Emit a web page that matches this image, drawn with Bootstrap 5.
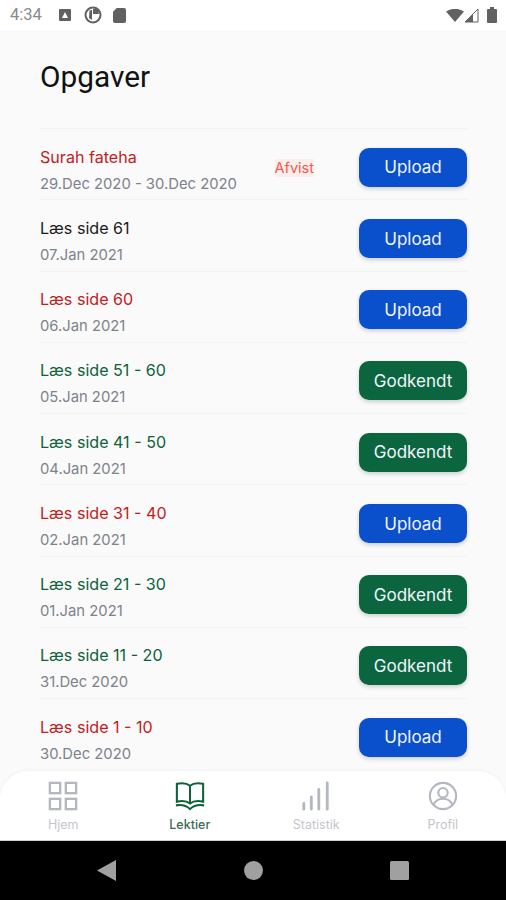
<!DOCTYPE html>
<html lang="da">
<head>
  <meta charset="UTF-8" />
  <meta name="viewport" content="width=device-width, initial-scale=1.0"/>
  <title>Opgaver</title>
  <link href="https://cdn.jsdelivr.net/npm/bootstrap@5.3.0/dist/css/bootstrap.min.css" rel="stylesheet"/>
  <style>
    html, body { height: 100%; }
    body {
      background-color: #fafafa;
      font-family: "Inter", sans-serif;
      overflow: hidden;
    }
    .app-screen { height: 900px; }
    .status-bar {
      height: 30px;
      background-color: #fff;
      color: #8a8a8a;
      font-family: "Roboto", sans-serif;
      font-size: 16.5px;
      padding: 0 9px 0 10px;
    }
    .content-area { padding: 0 39px 0 40px; min-height: 0; }
    .page-title {
      font-family: "Roboto", sans-serif;
      font-size: 29.8px;
      font-weight: 400;
      line-height: 36px;
      color: #111;
      margin: 29px 0 33px;
    }
    .task-row {
      height: 71.25px;
      padding-top: 6px;
      border-top: 1px solid #f3f3f4;
    }
    .task-text { padding-top: 5px; }
    .task-title { font-size: 16.1px; line-height: 20px; margin-bottom: 8px; }
    .task-date { font-size: 14.8px; line-height: 18px; color: #7d828c; }
    .tone-red { color: #c3201c; }
    .tone-green { color: #0e6239; }
    .tone-dark { color: #1a1a1a; }
    .status-tag {
      font-size: 14.5px;
      line-height: 18px;
      color: #ee5a4f;
      background-color: #fdeeec;
      margin: 2px 45px 0 0;
    }
    .task-btn {
      width: 108px;
      height: 39px;
      padding: 2px 0 0;
      border: 0;
      border-radius: 10px;
      color: #f2f5fb;
      font-size: 17px;
      box-shadow: 0 2px 4px rgba(0, 0, 0, .18);
    }
    .btn-upload, .btn-upload:hover { background-color: #0a4fcb; color: #f2f5fb; }
    .btn-approved, .btn-approved:hover { background-color: #0b6640; color: #f2f5fb; }
    .bottom-tabs {
      height: 70px;
      background-color: #fff;
      border-radius: 28px 28px 0 0;
      border-bottom: 1px solid #d0d0d0;
      box-shadow: 0 -1px 3px rgba(0, 0, 0, .04);
      flex-shrink: 0;
    }
    .tab-item {
      width: 25%;
      font-size: 12.5px;
      line-height: 16px;
      color: #c3c6cc;
      padding-top: 10px;
    }
    .tab-item svg { display: block; margin: 0 auto 6px; }
    .tab-active { color: #3c6a58; font-weight: 500; }
    .nav-keys { height: 59px; background-color: #000; flex-shrink: 0; }
    .nav-keys-inner { width: 312px; }
    .gap-a { margin-left: 17px; }
    .gap-b { margin-left: 13px; }
    .gap-c { margin-left: 11px; }
  </style>
</head>
<body>
  <div class="app-screen d-flex flex-column">
    <div class="status-bar d-flex align-items-center flex-shrink-0">
      <span>4:34</span>
      <svg class="gap-a" width="12" height="12" viewBox="0 0 12 12"><rect width="12" height="12" rx="1" fill="#616161"/><path d="M6 3 9 9H3z" fill="#fff"/></svg>
      <svg class="gap-b" width="18" height="18" viewBox="0 0 18 18"><circle cx="9" cy="9" r="7.500" fill="none" stroke="#616161" stroke-width="2"/><path d="M9 3h5l1 5H9z" fill="#616161"/><path d="M5.500 4.500 8 4v10l-3-2z" fill="#616161"/></svg>
      <svg class="gap-c" width="13" height="15" viewBox="0 0 14 16"><path d="M4 0h8a2 2 0 0 1 2 2v12a2 2 0 0 1-2 2H2a2 2 0 0 1-2-2V4z" fill="#616161"/></svg>
      <svg class="ms-auto" width="18" height="13" viewBox="0 0 18 13"><path d="M0 2.500Q9-3 18 2.500L9 13z" fill="#616161"/></svg>
      <svg width="15" height="15" viewBox="0 0 15 15"><path d="M14 1v13H1z" fill="none" stroke="#616161" stroke-width="1"/><path d="M9 6v8H1.500z" fill="#616161"/></svg>
      <svg class="ms-2" width="10" height="16" viewBox="0 0 10 16"><path d="M3 0h4v2h2a1 1 0 0 1 1 1v12a1 1 0 0 1-1 1H1a1 1 0 0 1-1-1V3a1 1 0 0 1 1-1h2z" fill="#616161"/></svg>
    </div>

    <main class="content-area flex-grow-1 overflow-hidden">
      <h1 class="page-title">Opgaver</h1>
      <div id="taskList"></div>
    </main>

    <nav class="bottom-tabs d-flex text-center">
      <div class="tab-item">
        <svg width="30" height="30" viewBox="0 0 32 32" fill="none" stroke="#b4b7bf" stroke-width="2.500"><rect x="2" y="2" width="11" height="11"/><rect x="19" y="2" width="11" height="11"/><rect x="2" y="19" width="11" height="11"/><rect x="19" y="19" width="11" height="11"/></svg>
        Hjem
      </div>
      <div class="tab-item tab-active">
        <svg width="30" height="30" viewBox="0 0 32 32" fill="none" stroke="#0e6239" stroke-width="2.200"><path d="M16 5C13 2.500 7 2 2 3v19c5-1 11-.5 14 2 3-2.500 9-3 14-2V3C25 2 19 2.500 16 5z"/><path d="M16 5v19"/><path d="M1 26c6-1 11 0 15 4 4-4 9-5 15-4"/></svg>
        Lektier
      </div>
      <div class="tab-item">
        <svg width="30" height="30" viewBox="0 0 32 32" fill="none" stroke="#b4b7bf" stroke-width="3" stroke-linecap="round"><path d="M3 24v6M11 17v13M19 9v21M28 2v28"/></svg>
        Statistik
      </div>
      <div class="tab-item">
        <svg width="30" height="30" viewBox="0 0 32 32" fill="none" stroke="#b4b7bf" stroke-width="2.200"><circle cx="16" cy="16" r="14"/><circle cx="16" cy="12.500" r="5"/><path d="M6 25.500c2-5 6-6.500 10-6.500s8 1.500 10 6.500"/></svg>
        Profil
      </div>
    </nav>

    <div class="nav-keys d-flex justify-content-center align-items-center">
      <div class="nav-keys-inner d-flex justify-content-between align-items-center">
        <svg width="19" height="21" viewBox="0 0 19 21"><path d="M19 0v21L0 10.500z" fill="#a0a0a0"/></svg>
        <svg width="19" height="19" viewBox="0 0 19 19"><circle cx="9.500" cy="9.500" r="9.500" fill="#a0a0a0"/></svg>
        <svg width="19" height="19" viewBox="0 0 19 19"><rect width="19" height="19" rx="1.500" fill="#a0a0a0"/></svg>
      </div>
    </div>
  </div>

  <script>
    const opgaver = [
      { titel: "Surah fateha", dato: "29.Dec 2020 - 30.Dec 2020", tone: "red", knap: "Upload", tag: "Afvist" },
      { titel: "Læs side 61", dato: "07.Jan 2021", tone: "dark", knap: "Upload" },
      { titel: "Læs side 60", dato: "06.Jan 2021", tone: "red", knap: "Upload" },
      { titel: "Læs side 51 - 60", dato: "05.Jan 2021", tone: "green", knap: "Godkendt" },
      { titel: "Læs side 41 - 50", dato: "04.Jan 2021", tone: "green", knap: "Godkendt" },
      { titel: "Læs side 31 - 40", dato: "02.Jan 2021", tone: "red", knap: "Upload" },
      { titel: "Læs side 21 - 30", dato: "01.Jan 2021", tone: "green", knap: "Godkendt" },
      { titel: "Læs side 11 - 20", dato: "31.Dec 2020", tone: "green", knap: "Godkendt" },
      { titel: "Læs side 1 - 10", dato: "30.Dec 2020", tone: "red", knap: "Upload" }
    ];
    const liste = document.getElementById("taskList");
    opgaver.forEach(o => {
      const row = document.createElement("div");
      row.className = "task-row d-flex align-items-center";
      row.innerHTML = `
        <div class="task-text flex-grow-1">
          <div class="task-title tone-${o.tone}">${o.titel}</div>
          <div class="task-date">${o.dato}</div>
        </div>
        ${o.tag ? `<span class="status-tag">${o.tag}</span>` : ""}
        <button class="btn task-btn ${o.knap === "Upload" ? "btn-upload" : "btn-approved"}">${o.knap}</button>
      `;
      liste.appendChild(row);
    });
  </script>
  <script src="https://cdn.jsdelivr.net/npm/bootstrap@5.3.0/dist/js/bootstrap.bundle.min.js"></script>
</body>
</html>
